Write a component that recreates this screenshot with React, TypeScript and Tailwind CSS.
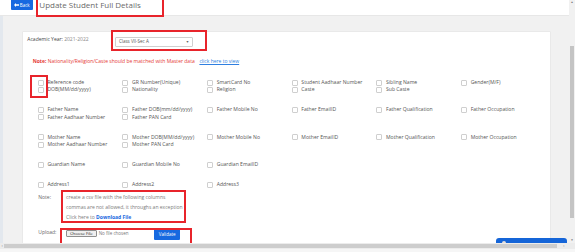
import React from "react";

const group1 = [
  "Reference code",
  "GR Number(Unique)",
  "SmartCard No",
  "Student Aadhaar Number",
  "Sibling Name",
  "Gender(M/F)",
  "DOB(MM/dd/yyyy)",
  "Nationality",
  "Religion",
  "Caste",
  "Sub Caste",
];
const group2 = [
  "Father Name",
  "Father DOB(mm/dd/yyyy)",
  "Father Mobile No",
  "Father EmailID",
  "Father Qualification",
  "Father Occupation",
  "Father Aadhaar Number",
  "Father PAN Card",
];
const group3 = [
  "Mother Name",
  "Mother DOB(MM/dd/yyyy)",
  "Mother Mobile No",
  "Mother EmailID",
  "Mother Qualification",
  "Mother Occupation",
  "Mother Aadhaar Number",
  "Mother PAN Card",
];
const group4 = ["Guardian Name", "Guardian Mobile No", "Guardian EmailID"];
const group5 = ["Address1", "Address2", "Address3"];

function Group({ items, last }: { items: string[]; last?: boolean }) {
  return (
    <div
      className={`grid grid-cols-[repeat(6,84.67px)] ${last ? "" : "mb-[12.67px]"}`}
    >
      {items.map((t) => (
        <div key={t} className="flex items-center h-[7.33px]">
          <span className="w-[6px] h-[6px] border border-[#cfcfcf] rounded-[1px] bg-white shrink-0" />
          <span className="ml-[3.7px] text-[5.1px] leading-none text-[#555] whitespace-nowrap">
            {t}
          </span>
        </div>
      ))}
    </div>
  );
}

export default function App() {
  return (
    <div className="w-[575px] h-[252px] overflow-hidden relative flex flex-col bg-white font-['Open_Sans','Noto_Sans',sans-serif]">
      <div className="flex h-[243px]">
        <div className="flex-1 flex flex-col overflow-hidden">
          {/* header */}
          <div className="h-[16px] shrink-0 bg-white border-b border-[#e7e7e7] flex items-start relative z-10">
            <button className="ml-[11px] w-[22px] h-[10px] bg-[#1769e0] text-white text-[4.5px] leading-none flex items-center justify-center rounded-b-[1px]">
              <svg width="5" height="4" viewBox="0 0 10 8" className="mr-[0.5px]">
                <path d="M0 4 L4 0 L4 2.5 L10 2.5 L10 5.5 L4 5.5 L4 8 Z" fill="white" />
              </svg>
              Back
            </button>
            <div className="ml-[3px] -mt-[4px] h-[21px] w-[128px] border-2 border-[#e8242b] pl-[1.3px] pt-[2.7px] shrink-0">
              <div className="text-[8px] leading-[7px] text-[#6a6a6a] whitespace-nowrap">
                Update Student Full Details
              </div>
            </div>
          </div>
          {/* body */}
          <div className="flex-1 flex bg-[#f1f1f1] overflow-hidden">
            <div className="w-[3px] bg-[#e3e8ee] shrink-0" />
            <div className="pl-[19px] pt-[15px]">
              <div className="relative w-[529px] h-[260px] bg-white border border-[#e9e9e9] rounded-[1px]">
                {/* academic year */}
                <div className="flex items-start pt-[4.7px] pl-[4.3px]">
                  <div className="w-[87.7px] -mt-[1px] text-[5px] leading-[6px] whitespace-nowrap">
                    <span className="text-[#444]">Academic Year:</span>{" "}
                    <span className="text-[#888]">2021-2022</span>
                  </div>
                  <div className="w-[77.7px] h-[10px] border border-[#cfcfcf] rounded-[1px] flex items-center justify-between pl-[3px] pr-[2.5px] text-[4.5px] text-[#555]">
                    <span>Class VII-Sec A</span>
                    <span className="text-[3.5px] text-[#666]">▼</span>
                  </div>
                </div>
                {/* note */}
                <div className="mt-[11px] pl-[9.7px] text-[5px] leading-[6px] whitespace-nowrap flex">
                  <span className="text-[#e53935]">
                    <span className="font-bold">Note:</span> Nationality/Religion/Caste should be matched with Master data
                  </span>
                  <span className="ml-[4.7px] text-[#2f7fe0] underline">click here to view</span>
                </div>
                {/* checkboxes */}
                <div className="mt-[15.3px] pl-[14.7px]">
                  <Group items={group1} />
                  <Group items={group2} />
                  <Group items={group3} />
                  <Group items={group4} />
                  <Group items={group5} last />
                </div>
                {/* notes */}
                <div className="mt-[4px] pl-[15.3px] flex items-start text-[5px] leading-[10px]">
                  <div className="w-[27.7px] text-[#666]">Note:</div>
                  <div className="text-[#7a7a7a] whitespace-nowrap">
                    <div>create a csv file with the following columns</div>
                    <div>commas are not allowed, it throughs an exception</div>
                    <div>
                      Click here to <span className="text-[#1769e0] font-bold">Download File</span>
                    </div>
                  </div>
                </div>
                {/* upload */}
                <div className="mt-[7px] pl-[15.3px] flex items-start">
                  <div className="w-[27.7px] text-[5px] leading-[6px] text-[#666]">Upload:</div>
                  <div className="w-[88px] mt-[1px] flex items-center">
                    <div className="w-[30.7px] h-[6.6px] border border-[#8f8f8f] bg-[#efefef] rounded-[1px] text-[4.3px] leading-none text-[#222] flex items-center justify-center">
                      Choose File
                    </div>
                    <span className="ml-[2px] text-[4.5px] leading-none text-[#777]">No file chosen</span>
                  </div>
                  <div className="w-[26.3px] h-[10.6px] bg-[#1769e0] rounded-[1px] text-white text-[4.5px] leading-none flex items-center justify-center">
                    Validate
                  </div>
                </div>

                {/* red annotation boxes */}
                <div className="absolute left-[88px] top-[-2px] w-[96px] h-[20.5px] border-2 border-[#e8242b]" />
                <div className="absolute left-[7px] top-[42.5px] w-[18px] h-[23.5px] border-2 border-[#e8242b]" />
                <div className="absolute left-[37.7px] top-[158px] w-[125px] h-[33px] border-2 border-[#e8242b]" />
                <div className="absolute left-[37px] top-[195.7px] w-[132px] h-[30px] border-2 border-[#e8242b]" />
              </div>
            </div>
          </div>
        </div>
        {/* vertical scrollbar */}
        <div className="w-[6px] bg-[#f1f1f1] flex flex-col items-center shrink-0">
          <div className="mt-[1px] text-[3px] leading-none text-[#777]">▲</div>
          <div className="mt-[42px] w-[4.5px] h-[172px] bg-[#c4c4c4]" />
          <div className="mt-auto mb-[1px] text-[3px] leading-none text-[#777]">▼</div>
        </div>
      </div>
      {/* horizontal scrollbar */}
      <div className="h-[6px] bg-[#ececec] flex items-center shrink-0">
        <span className="ml-[1.5px] text-[4px] leading-none text-[#555]">‹</span>
        <div className="ml-[1.5px] w-[553px] h-[4.5px] bg-[#cdcdcd]" />
        <span className="ml-[6px] text-[4px] leading-none text-[#555]">›</span>
      </div>
      <div className="flex-1 bg-[#f6f6f6]" />

      {/* chat widget */}
      <div className="absolute left-[495.7px] top-[238.3px] w-[71.3px] h-[5px] bg-[#1565d8] rounded-t-[3px] overflow-hidden">
        <div className="ml-[6px] mt-[2.5px] w-[4px] h-[4px] rounded-full bg-[#e8e0da]" />
      </div>
    </div>
  );
}
